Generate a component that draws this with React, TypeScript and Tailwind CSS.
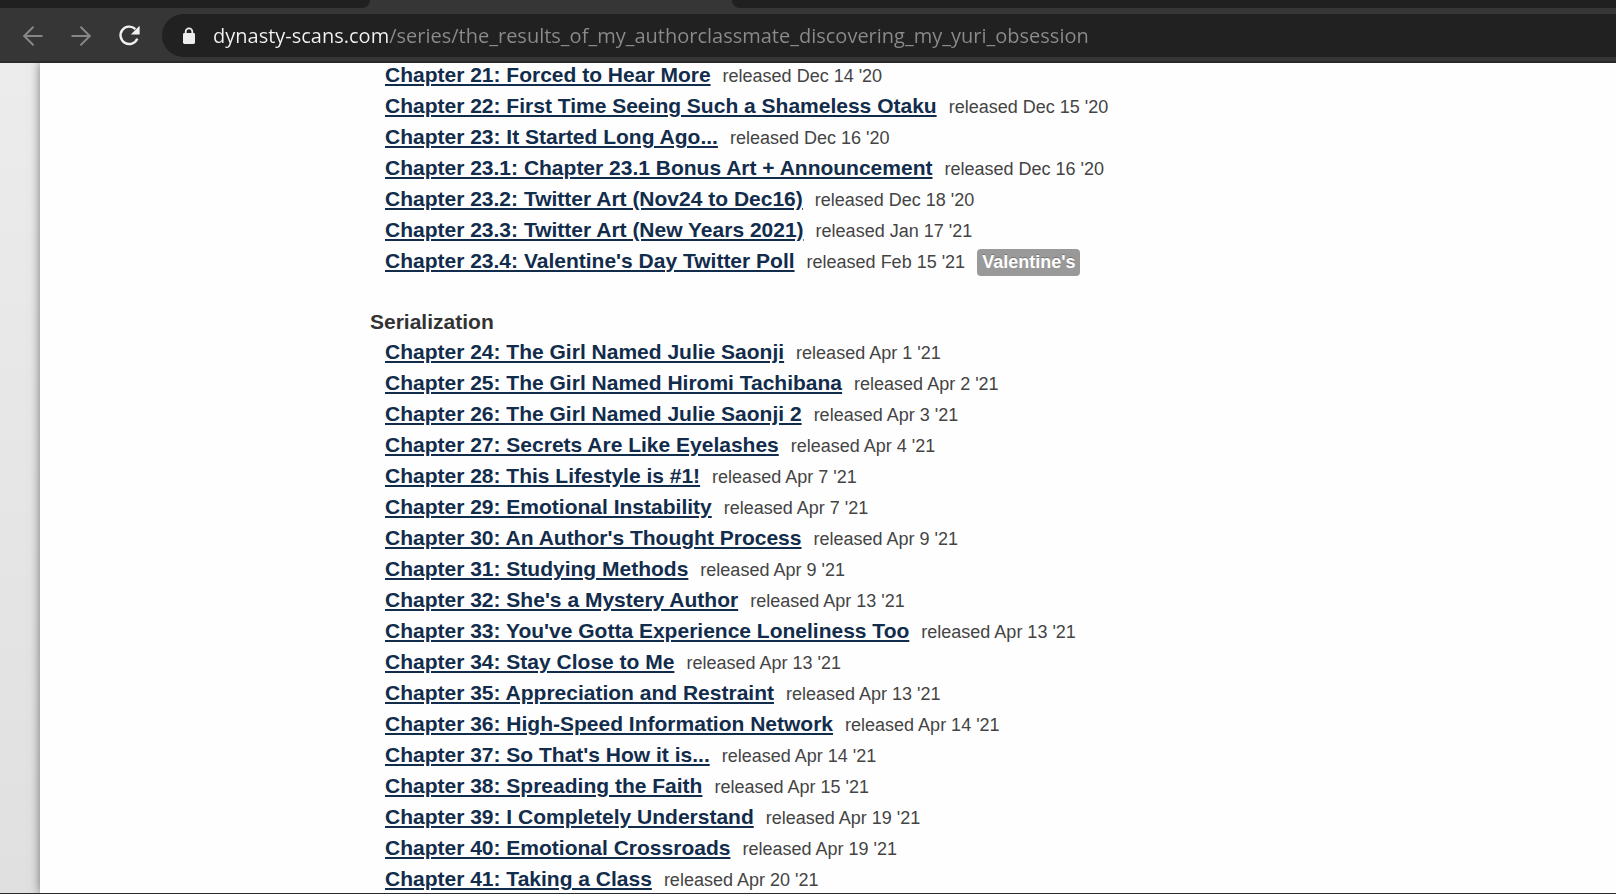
import { ArrowLeft, ArrowRight } from "lucide-react";

type Chapter = {
    title: string;
    released: string;
    tag?: string;
};

const oneshots: Chapter[] = [
    { title: "Chapter 21: Forced to Hear More", released: "Dec 14 '20" },
    { title: "Chapter 22: First Time Seeing Such a Shameless Otaku", released: "Dec 15 '20" },
    { title: "Chapter 23: It Started Long Ago...", released: "Dec 16 '20" },
    { title: "Chapter 23.1: Chapter 23.1 Bonus Art + Announcement", released: "Dec 16 '20" },
    { title: "Chapter 23.2: Twitter Art (Nov24 to Dec16)", released: "Dec 18 '20" },
    { title: "Chapter 23.3: Twitter Art (New Years 2021)", released: "Jan 17 '21" },
    { title: "Chapter 23.4: Valentine's Day Twitter Poll", released: "Feb 15 '21", tag: "Valentine's" },
];

const serialization: Chapter[] = [
    { title: "Chapter 24: The Girl Named Julie Saonji", released: "Apr 1 '21" },
    { title: "Chapter 25: The Girl Named Hiromi Tachibana", released: "Apr 2 '21" },
    { title: "Chapter 26: The Girl Named Julie Saonji 2", released: "Apr 3 '21" },
    { title: "Chapter 27: Secrets Are Like Eyelashes", released: "Apr 4 '21" },
    { title: "Chapter 28: This Lifestyle is #1!", released: "Apr 7 '21" },
    { title: "Chapter 29: Emotional Instability", released: "Apr 7 '21" },
    { title: "Chapter 30: An Author's Thought Process", released: "Apr 9 '21" },
    { title: "Chapter 31: Studying Methods", released: "Apr 9 '21" },
    { title: "Chapter 32: She's a Mystery Author", released: "Apr 13 '21" },
    { title: "Chapter 33: You've Gotta Experience Loneliness Too", released: "Apr 13 '21" },
    { title: "Chapter 34: Stay Close to Me", released: "Apr 13 '21" },
    { title: "Chapter 35: Appreciation and Restraint", released: "Apr 13 '21" },
    { title: "Chapter 36: High-Speed Information Network", released: "Apr 14 '21" },
    { title: "Chapter 37: So That's How it is...", released: "Apr 14 '21" },
    { title: "Chapter 38: Spreading the Faith", released: "Apr 15 '21" },
    { title: "Chapter 39: I Completely Understand", released: "Apr 19 '21" },
    { title: "Chapter 40: Emotional Crossroads", released: "Apr 19 '21" },
    { title: "Chapter 41: Taking a Class", released: "Apr 20 '21" },
];

function BrowserBar() {
    return (
        <header className="shrink-0 border-b-2 border-[#2a2a2b] bg-[#363637]">
            {/* Bottom edge of the tab strip */}
            <div className="flex h-2">
                <div className="w-[370px] rounded-br-lg bg-[#202020]" />
                <div className="w-[362px]" />
                <div className="flex-1 rounded-bl-lg bg-[#202020]" />
            </div>

            <div className="flex items-center pt-[6px] pb-1 pl-[18px]">
                <button aria-label="Back" className="flex w-12 text-[#868686]">
                    <ArrowLeft size={30} strokeWidth={1.6} />
                </button>
                <button aria-label="Forward" className="flex w-[50px] text-[#868686]">
                    <ArrowRight size={30} strokeWidth={1.6} />
                </button>
                <button aria-label="Reload" className="flex w-[46px] text-[#f1f1f1]">
                    <svg width="26" height="26" viewBox="0 0 26 26" fill="none">
                        <path d="M19.4 6.2A8.7 8.7 0 1 0 21.3 15.6" stroke="currentColor" strokeWidth="2.4" />
                        <path d="M23.6 2.8v8.8h-8.8z" fill="currentColor" />
                    </svg>
                </button>

                <div className="flex h-[43px] flex-1 items-center rounded-l-full bg-[#212121] pl-5">
                    <svg width="14" height="18" viewBox="0 0 14 18" className="mr-[17px] shrink-0 text-[#ededed]">
                        <rect x="1" y="6" width="12" height="11" rx="1.4" fill="currentColor" />
                        <path d="M3.7 7V4.6a3.3 3.3 0 0 1 6.6 0V7" fill="none" stroke="currentColor" strokeWidth="1.8" />
                    </svg>
                    {/* Host is bright, path is dimmed */}
                    <input
                        type="text"
                        aria-label="Address"
                        defaultValue="dynasty-scans.com/series/the_results_of_my_authorclassmate_discovering_my_yuri_obsession"
                        className="h-full min-w-0 flex-1 bg-[linear-gradient(90deg,#f4f4f4_176px,#8b8b8b_176px)] bg-clip-text font-['Open_Sans',sans-serif] text-[20px] text-transparent outline-none"
                    />
                </div>
            </div>
        </header>
    );
}

function ChapterList({ chapters }: { chapters: Chapter[] }) {
    return (
        <ul className="pl-[15px]">
            {chapters.map((chapter) => (
                <li key={chapter.title} className="flex h-[31px] items-baseline gap-3 whitespace-nowrap leading-[31px]">
                    <a href="#" className="text-[21px] font-bold text-[#122c4c] underline decoration-2 underline-offset-2">
                        {chapter.title}
                    </a>
                    <small className="text-lg leading-[31px] text-[#444]">released {chapter.released}</small>
                    {chapter.tag && (
                        <a
                            href="#"
                            className="rounded bg-[#999] px-[5px] text-lg font-bold leading-[27px] text-white [text-shadow:0_-1px_0_rgba(0,0,0,0.25)]"
                        >
                            {chapter.tag}
                        </a>
                    )}
                </li>
            ))}
        </ul>
    );
}

export default function App() {
    return (
        <div className="flex h-screen flex-col overflow-hidden border-b border-[#2b2b2b] font-['Liberation_Sans',Arial,sans-serif]">
            <BrowserBar />
            {/* The list is scrolled part of the way down, so it starts under the bar */}
            <div className="flex min-h-0 flex-1 overflow-hidden bg-linear-to-b from-[#ececec] to-[#e0e0e0] pl-10">
                <main className="flex-1 bg-[#fefefe] pl-[330px] shadow-[0_0_10px_rgba(0,0,0,0.5)]">
                    <div className="-mt-1">
                        <ChapterList chapters={oneshots} />
                        <h2 className="mt-8 text-[21px] font-bold leading-7 text-[#333]">Serialization</h2>
                        <ChapterList chapters={serialization} />
                    </div>
                </main>
            </div>
        </div>
    );
}
